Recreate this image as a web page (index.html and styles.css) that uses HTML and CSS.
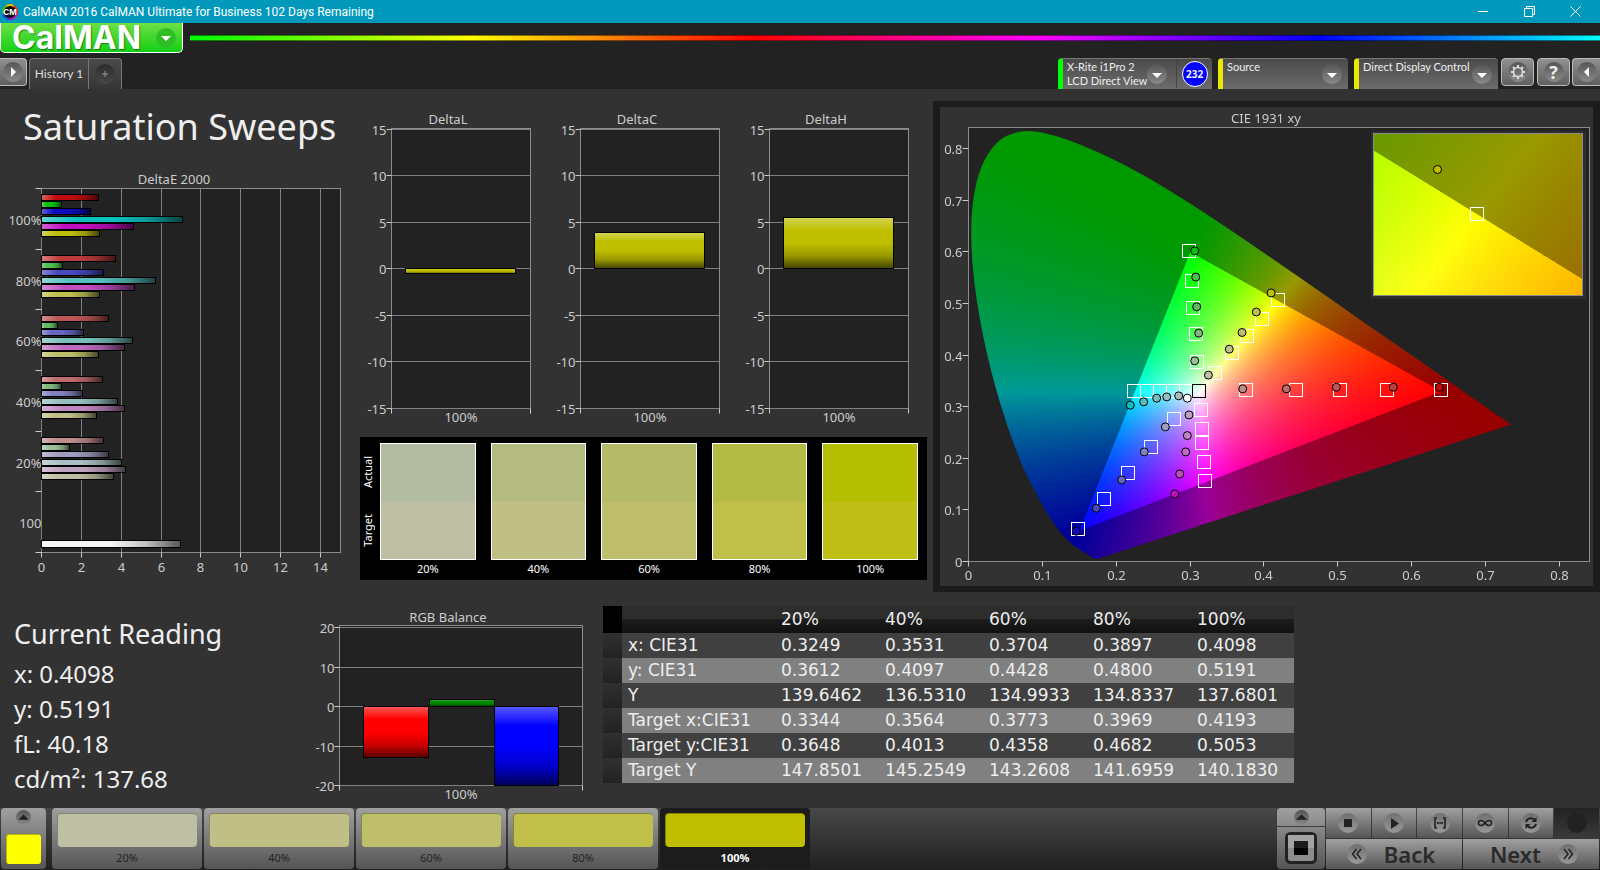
FILE: index.html
```html
<!DOCTYPE html>
<html lang="en">
<head>
<meta charset="UTF-8">
<meta name="viewport" content="width=device-width, initial-scale=1.0">
<title>CalMAN 2016 CalMAN Ultimate for Business</title>
<link rel="stylesheet" href="styles.css">
</head>
<body>

<div class="titlebar">
  <svg class="app-icon" viewBox="0 0 16 16">
    <circle cx="8" cy="8" r="8" fill="#e02a1a"/>
    <path d="M8 8L0 10A8 8 0 0 1 4 1z" fill="#35c020"/>
    <path d="M8 8L4 1A8 8 0 0 1 12 1z" fill="#d8c400"/>
    <path d="M8 8L12 15A8 8 0 0 1 0 10z" fill="#1c4be0"/>
    <path d="M8 8L16 9A8 8 0 0 1 8 16z" fill="#b01ac0"/>
    <circle cx="8" cy="8" r="6" fill="#080808"/>
    <text x="8" y="11" text-anchor="middle" class="app-icon-text">CM</text>
  </svg>
  <span class="titlebar-text">CalMAN 2016 CalMAN Ultimate for Business 102 Days Remaining</span>
  <div class="window-buttons">
    <button type="button" aria-label="Minimize"><svg width="11" height="11" viewBox="0 0 11 11"><path d="M0 5.5h10"/></svg></button>
    <button type="button" aria-label="Restore"><svg width="11" height="11" viewBox="0 0 11 11"><path d="M.5 2.5h8v8h-8zM2.5 2.5v-2h8v8h-2"/></svg></button>
    <button type="button" aria-label="Close"><svg width="11" height="11" viewBox="0 0 11 11"><path d="M.5.5l10 10M10.5.5l-10 10"/></svg></button>
  </div>
</div>

<div class="brand-row">
  <button type="button" class="brand">
    <span class="brand-text">CalMAN</span>
    <svg class="brand-arrow" viewBox="0 0 20 20"><circle cx="10" cy="10" r="10" fill="#2fbf25"/><path d="M5 8h10l-5 5z" fill="#fff"/></svg>
  </button>
  <div class="spectrum"></div>
</div>

<div class="tab-row">
  <button type="button" class="square-btn first" aria-label="Expand"><span class="dimple"><svg viewBox="0 0 20 20"><path d="M8 5l5 5-5 5z" fill="#fff"/></svg></span></button>
  <div class="tabs">
    <button type="button" class="tab">History 1</button>
    <button type="button" class="tab tab-add" aria-label="Add tab"><span class="dimple"><svg viewBox="0 0 20 20"><path d="M10 7v6M7 10h6" stroke="#999"/></svg></span></button>
  </div>
  <div class="devices">
    <button type="button" class="device meter green">
      <span class="device-name">X-Rite i1Pro 2<br>LCD Direct View</span>
      <span class="dimple"><svg viewBox="0 0 20 20"><path d="M5 9h10l-5 5z" fill="#fff"/></svg></span>
      <span class="meter-count"><b>232</b></span>
    </button>
    <button type="button" class="device source yellow">
      <span class="device-name">Source</span>
      <span class="dimple"><svg viewBox="0 0 20 20"><path d="M5 9h10l-5 5z" fill="#fff"/></svg></span>
    </button>
    <button type="button" class="device display yellow">
      <span class="device-name">Direct Display Control</span>
      <span class="dimple"><svg viewBox="0 0 20 20"><path d="M5 9h10l-5 5z" fill="#fff"/></svg></span>
    </button>
    <button type="button" class="square-btn" aria-label="Settings"><span class="dimple"><svg viewBox="0 0 20 20"><circle cx="10" cy="10" r="4.5" fill="none" stroke="#ddd" stroke-width="1.6"/><path d="M10 3v2M10 15v2M3 10h2M15 10h2M5 5l1.500 1.500M13.500 13.500L15 15M15 5l-1.500 1.500M6.500 13.500L5 15" stroke="#ddd" stroke-width="2"/></svg></span></button>
    <button type="button" class="square-btn help" aria-label="Help"><span class="dimple">?</span></button>
    <button type="button" class="square-btn last" aria-label="Collapse"><span class="dimple"><svg viewBox="0 0 20 20"><path d="M12 5l-5 5 5 5z" fill="#fff"/></svg></span></button>
  </div>
</div>

<main>
  <section class="upper">
    <div class="sweeps">
      <h1>Saturation Sweeps</h1>
      <svg id="deltaE" class="chart" viewBox="0 0 352 410"></svg>
    </div>

    <div class="deltas">
      <div class="delta-charts">
        <svg id="deltaL" class="chart" viewBox="0 0 189 320"></svg>
        <svg id="deltaC" class="chart" viewBox="0 0 189 320"></svg>
        <svg id="deltaH" class="chart" viewBox="0 0 189 320"></svg>
      </div>
      <div class="swatches">
        <div class="swatch-side"><span>Actual</span><span>Target</span></div>
        <div class="swatch-list">
          <div class="s20"><div class="pair"><i></i><i></i></div>20%</div>
          <div class="s40"><div class="pair"><i></i><i></i></div>40%</div>
          <div class="s60"><div class="pair"><i></i><i></i></div>60%</div>
          <div class="s80"><div class="pair"><i></i><i></i></div>80%</div>
          <div class="s100"><div class="pair"><i></i><i></i></div>100%</div>
        </div>
      </div>
    </div>

    <div class="cie">
      <canvas id="gamut" width="653" height="479"></canvas>
      <svg id="ciePlot" class="chart cie-overlay" viewBox="0 0 653 479"></svg>
    </div>
  </section>

  <section class="lower">
    <div class="reading">
      <h2>Current Reading</h2>
      <p>x: 0.4098</p>
      <p>y: 0.5191</p>
      <p>fL: 40.18</p>
      <p>cd/m²: 137.68</p>
    </div>
    <svg id="rgb" class="chart rgb-chart" viewBox="0 0 280 200"></svg>
    <table class="data">
      <thead>
        <tr><th class="row-head"></th><th class="name"></th><th>20%</th><th>40%</th><th>60%</th><th>80%</th><th>100%</th></tr>
      </thead>
      <tbody>
        <tr><td class="row-head"></td><td class="name">x: CIE31</td><td>0.3249</td><td>0.3531</td><td>0.3704</td><td>0.3897</td><td>0.4098</td></tr>
        <tr><td class="row-head"></td><td class="name">y: CIE31</td><td>0.3612</td><td>0.4097</td><td>0.4428</td><td>0.4800</td><td>0.5191</td></tr>
        <tr><td class="row-head"></td><td class="name">Y</td><td>139.6462</td><td>136.5310</td><td>134.9933</td><td>134.8337</td><td>137.6801</td></tr>
        <tr><td class="row-head"></td><td class="name">Target x:CIE31</td><td>0.3344</td><td>0.3564</td><td>0.3773</td><td>0.3969</td><td>0.4193</td></tr>
        <tr><td class="row-head"></td><td class="name">Target y:CIE31</td><td>0.3648</td><td>0.4013</td><td>0.4358</td><td>0.4682</td><td>0.5053</td></tr>
        <tr><td class="row-head"></td><td class="name">Target Y</td><td>147.8501</td><td>145.2549</td><td>143.2608</td><td>141.6959</td><td>140.1830</td></tr>
      </tbody>
    </table>
  </section>
</main>

<footer>
  <button type="button" class="current-color" aria-label="Current color">
    <span class="dimple small"><svg viewBox="0 0 20 20"><path d="M3 13h14l-7-7z" fill="#222"/></svg></span>
    <i></i>
  </button>
  <div class="levels">
    <button type="button" class="level s20"><i></i>20%</button>
    <button type="button" class="level s40"><i></i>40%</button>
    <button type="button" class="level s60"><i></i>60%</button>
    <button type="button" class="level s80"><i></i>80%</button>
    <button type="button" class="level s100 selected"><i></i>100%</button>
  </div>
  <div class="mode">
    <button type="button" class="mode-up" aria-label="Show more"><span class="dimple small"><svg viewBox="0 0 20 20"><path d="M2 13h16l-8-7z" fill="#222"/></svg></span></button>
    <button type="button" class="mode-stop" aria-label="Pattern window"><svg width="32" height="32" viewBox="0 0 32 32"><rect x="1.500" y="1.500" width="29" height="29" rx="4" fill="#8c8c8c" stroke="#222" stroke-width="3"/><path d="M3 3h26v13H3z" fill="#a4a4a4"/><path d="M9 9h14v14H9z" fill="#000"/><path d="M9 9h14v7H9z" fill="#1c1c1c"/></svg></button>
  </div>
  <div class="controls">
    <button type="button" aria-label="Stop"><span class="dimple"><svg viewBox="0 0 20 20"><path d="M6 6h8v8H6z" fill="#222"/></svg></span></button>
    <button type="button" aria-label="Play"><span class="dimple"><svg viewBox="0 0 20 20"><path d="M7 5l8 5.500L7 16z" fill="#222"/></svg></span></button>
    <button type="button" aria-label="Read series"><span class="dimple"><svg viewBox="0 0 20 20"><path d="M7 5H5v10h2M13 5h2v10h-2" fill="none" stroke="#222" stroke-width="1.600"/><path d="M7 9h1.500v2H7zM9.300 9h1.500v2H9.300zM11.500 9H13v2h-1.500z" fill="#222"/></svg></span></button>
    <button type="button" aria-label="Continuous"><span class="dimple"><svg viewBox="0 0 20 20"><path d="M10 10C8 7 3.500 6.500 3.500 10S8 13 10 10s6.500-3.500 6.500 0S12 13 10 10z" fill="none" stroke="#222" stroke-width="1.600"/></svg></span></button>
    <button type="button" aria-label="Refresh"><span class="dimple"><svg viewBox="0 0 20 20"><path d="M5 9c1-4 6-5 8.500-2M15 11c-1 4-6 5-8.500 2" fill="none" stroke="#222" stroke-width="2"/><path d="M15.500 4v5h-5zM4.500 16v-5h5z" fill="#222"/></svg></span></button>
    <button type="button" class="off" aria-label="Record" disabled><span class="dimple"></span></button>
    <button type="button" class="nav"><span class="dimple"><svg viewBox="0 0 20 20"><path d="M9.500 5l-4 5 4 5M14 5l-4 5 4 5" fill="none" stroke="#222" stroke-width="1.500"/></svg></span><span>Back</span></button>
    <button type="button" class="nav"><span>Next</span><span class="dimple"><svg viewBox="0 0 20 20"><path d="M6 5l4 5-4 5M10.500 5l4 5-4 5" fill="none" stroke="#222" stroke-width="1.500"/></svg></span></button>
  </div>
</footer>

<script src="charts.js"></script>
</body>
</html>
```
FILE: styles.css
```css
* {
  box-sizing: border-box;
}

body {
  margin: 0;
  min-height: 100vh;
  display: flex;
  flex-direction: column;
  background: #222;
  color: #eee;
  font-family: "Noto Sans", "Open Sans", sans-serif;
}

button {
  border: 0;
  padding: 0;
  margin: 0;
  background: none;
  color: inherit;
  font-family: inherit;
  cursor: pointer;
}

svg {
  display: block;
}

/* title bar */
.titlebar {
  display: flex;
  align-items: center;
  height: 23px;
  padding-left: 2px;
  background: #0099bc;
}

.app-icon {
  width: 16px;
  height: 16px;
}

.app-icon-text {
  font: bold 8px Inter, sans-serif;
  fill: #fff;
}

.titlebar-text {
  margin-left: 5px;
  font-size: 12px;
  line-height: 16px;
  font-family: Roboto, sans-serif;
  color: #fff;
}

.window-buttons {
  display: flex;
  margin-left: auto;
}

.window-buttons button {
  width: 46px;
  height: 20px;
  display: flex;
  align-items: center;
  justify-content: center;
}

.window-buttons button:last-child {
  margin-right: 2px;
}

.window-buttons path {
  fill: none;
  stroke: #fff;
}

/* logo and rainbow line */
.brand-row {
  display: flex;
  height: 35px;
}

.brand {
  display: flex;
  align-items: center;
  justify-content: space-between;
  width: 183px;
  height: 30px;
  padding: 0 6px 0 11px;
  border: 1px solid #fff;
  border-top: 0;
  border-radius: 0 0 5px 5px;
  background: linear-gradient(#6de045, #15cf15);
}

.brand-text {
  font: bold 32px/28px Inter, sans-serif;
  color: #fff;
  text-shadow: 1px 1px 1px rgba(0, 0, 0, 0.4);
}

.brand-arrow {
  width: 20px;
  height: 20px;
}

.spectrum {
  flex: 1;
  height: 6px;
  margin: 12px 0 0 7px;
  border: solid rgba(0, 0, 0, 0.5);
  border-width: 1px 0;
  background: linear-gradient(to right, #0f0, #ff0, #f00, #f0f, #00f, #0ff) border-box;
}

/* tabs and devices */
.tab-row {
  display: flex;
  height: 31px;
}

.dimple {
  display: flex;
  align-items: center;
  justify-content: center;
  width: 20px;
  height: 20px;
  border-radius: 50%;
  background: linear-gradient(#555, #8a8a8a);
}

.dimple svg {
  width: 100%;
  height: 100%;
}

.dimple.small {
  width: 15px;
  height: 15px;
}

.square-btn {
  display: flex;
  align-items: center;
  justify-content: center;
  width: 33px;
  height: 28px;
  margin-left: 3px;
  border: 1px solid #bbb;
  border-radius: 4px;
  background: linear-gradient(#909090, #606060);
}

.square-btn.first {
  width: 27px;
  margin-left: 0;
  border-left: 0;
  border-radius: 0 4px 4px 0;
}

.square-btn.last {
  width: 28px;
  margin-left: 2px;
  border-right: 0;
  border-radius: 4px 0 0 4px;
}

.square-btn.help {
  font: bold 18px/20px "Open Sans", sans-serif;
}

.tabs {
  display: flex;
  margin-left: 2px;
  border: 1px solid #777;
  border-bottom: 0;
  border-radius: 4px 4px 0 0;
  background: linear-gradient(#4a4a4a, #363636);
}

.tab {
  width: 58px;
  font: 12px/16px Lato, sans-serif;
  white-space: nowrap;
  color: #ddd;
}

.tab-add {
  display: flex;
  align-items: center;
  justify-content: center;
  width: 33px;
  border-left: 1px solid #777;
}

.tab-add .dimple {
  background: linear-gradient(#2c2c2c, #484848);
}

.devices {
  display: flex;
  margin-left: auto;
}

.device {
  display: flex;
  align-items: flex-start;
  justify-content: space-between;
  margin-right: 6px;
  padding: 1px 6px 0 4px;
  border-left: 5px solid #ff0;
  border-top: 1px solid #777;
  border-radius: 4px 4px 0 0;
  background: linear-gradient(#4a4a4a, #6c6c6c);
}

.device.green {
  border-left-color: #0f0;
}

.device.yellow {
  border-left-color: #e8e800;
}

.device.meter {
  width: 154px;
  padding-right: 0;
}

.device.source {
  width: 130px;
}

.device.display {
  width: 144px;
  margin-right: 0;
}

.device-name {
  font: 11px/14px Lato, sans-serif;
  white-space: nowrap;
  text-align: left;
}

.device .dimple {
  flex: none;
  margin-top: 4px;
}

.meter .dimple {
  margin-left: auto;
  margin-right: 9px;
}

.meter-count {
  display: flex;
  align-items: center;
  justify-content: center;
  width: 36px;
  height: 28px;
  border-left: 1px solid #444;
}

.meter-count b {
  width: 26px;
  height: 26px;
  border: 1px solid #fff;
  border-radius: 50%;
  background: #00f;
  font-size: 10px;
  line-height: 24px;
  text-align: center;
}

/* main panel */
main {
  flex: 1;
  padding-left: 1px;
  background: #323232;
}

.upper {
  display: grid;
  grid-template-columns: 352fr 580fr 667fr;
  align-items: start;
}

.chart {
  width: 100%;
  height: auto;
}

.chart text {
  font-size: 13px;
  fill: #ccc;
  dominant-baseline: central;
}

.plot-area {
  fill: #222;
  stroke: #8c8c8c;
}

.grid-line {
  stroke: #808080;
}

.tick {
  stroke: #ccc;
}

.bar-edge {
  fill: none;
  stroke: #000;
}

h1 {
  margin: 14px 0 19px 22px;
  font-weight: normal;
  font-size: 36px;
  line-height: 48px;
  white-space: nowrap;
}

.delta-charts {
  display: grid;
  grid-template-columns: 1fr 1fr 1fr;
  padding: 16px 13px 0 0;
}

.swatches {
  display: flex;
  margin: 12px 6px 0 7px;
  padding: 6px 9px 2px 0;
  background: #000;
  color: #fff;
  font-size: 11px;
  line-height: 18px;
  text-align: center;
}

.swatch-side {
  display: flex;
  flex-direction: column;
  justify-content: space-around;
  align-items: center;
  width: 20px;
  height: 117px;
  padding-right: 4px;
}

.swatch-side span {
  writing-mode: vertical-rl;
  transform: rotate(180deg);
  line-height: 16px;
}

.swatch-list {
  flex: 1;
  display: grid;
  grid-template-columns: repeat(5, 1fr);
  gap: 15px;
}

.pair {
  display: flex;
  flex-direction: column;
  height: 117px;
  border: 1px solid #fff;
}

.pair i {
  flex: 1;
}

.s20 .pair { background: #b3bba2; }
.s20 .pair i + i, .s20 > i { background: #bfbfa4; }
.s40 .pair { background: #b3bb80; }
.s40 .pair i + i, .s40 > i { background: #bfbf86; }
.s60 .pair { background: #b3bb68; }
.s60 .pair i + i, .s60 > i { background: #bfbf6b; }
.s80 .pair { background: #b3bb45; }
.s80 .pair i + i, .s80 > i { background: #bfbf4a; }
.s100 .pair { background: #b3bf00; }
.s100 .pair i + i { background: #bfbf17; }
.s100 > i { background: #bfbf00; }

.cie {
  position: relative;
  margin-top: 12px;
  border: solid #1b1b1b;
  border-width: 6px 7px;
}

.cie canvas {
  display: block;
  width: 100%;
}

/* axes and markers lie over the painted gamut */
.cie-overlay {
  position: absolute;
  top: 0;
  left: 0;
}

.cie-overlay .plot-area {
  fill: none;
}

.target {
  fill: none;
  stroke: #fff;
}

.target.white {
  stroke: #000;
}

.actual {
  stroke: #000;
}

.lower {
  display: grid;
  grid-template-columns: 312fr 280fr 1007fr;
  align-items: start;
}

.reading {
  padding: 24px 0 0 13px;
}

.reading h2 {
  margin: 0 0 4px;
  font-weight: normal;
  font-size: 27px;
  line-height: 36px;
}

.reading p {
  margin: 0;
  font-size: 24px;
  line-height: 35px;
}

.rgb-chart {
  margin-top: 13px;
}

.data {
  width: 691px;
  margin: 14px 0 0 10px;
  border-collapse: collapse;
  table-layout: fixed;
  font-family: "DejaVu Sans", sans-serif;
  font-size: 17px;
  line-height: 25px;
}

.data th,
.data td {
  height: 25px;
  padding: 0;
  font-weight: normal;
  text-align: left;
}

.data th {
  width: 104px;
  height: 27px;
}

.data th:last-child {
  width: auto;
}

.data thead tr {
  background: linear-gradient(#2d2d2d 48%, #1c1c1c 50%, #111);
}

.data tbody tr {
  background: #404040;
}

.data tbody tr:nth-child(even) {
  background: #808080;
}

.data .row-head {
  width: 19px;
  background: linear-gradient(#303030, #222);
}

.data th.row-head {
  background: #000;
}

.data .name {
  width: 159px;
  padding-left: 6px;
}

/* bottom bar */
footer {
  display: flex;
  height: 62px;
  padding: 0 1px 1px;
  background: linear-gradient(#484848, #202020);
}

.current-color,
.level {
  display: flex;
  flex-direction: column;
  align-items: center;
  border-radius: 4px;
  background: linear-gradient(#a0a0a0, #555);
}

.current-color {
  justify-content: space-between;
  width: 45px;
  padding: 2px 5px 5px;
}

.current-color i {
  width: 35px;
  height: 30px;
  border-radius: 3px;
  border: solid #b8b800;
  border-width: 1px 0 0 1px;
  background: #ff0;
}

.levels {
  display: flex;
  gap: 2px;
  margin-left: 6px;
}

.level {
  width: 150px;
  padding: 5px 5px 0;
  color: #222;
  font-size: 11px;
  line-height: 22px;
}

.level i {
  width: 100%;
  height: 36px;
  border-radius: 4px;
  border: solid rgba(0, 0, 0, 0.3);
  border-width: 1px 0 0 1px;
}

.level.selected {
  background: #1c1c1c;
  color: #fff;
  font-weight: bold;
}

.mode {
  display: flex;
  flex-direction: column;
  width: 48px;
  margin-left: auto;
}

.mode button {
  display: flex;
  align-items: center;
  justify-content: center;
}

.mode-up {
  height: 18px;
  border-radius: 4px 4px 0 0;
  background: linear-gradient(#a0a0a0, #8a8a8a);
}

.mode-stop {
  flex: 1;
  margin-top: 1px;
  border-radius: 0 0 4px 4px;
  background: linear-gradient(#888, #555);
}

.controls {
  display: grid;
  grid-template-columns: repeat(6, 1fr);
  grid-template-rows: 30px 30px;
  gap: 1px;
  width: 273px;
  margin-left: 1px;
}

.controls button {
  display: flex;
  align-items: center;
  justify-content: center;
  background: linear-gradient(#a0a0a0, #555);
}

.controls .off {
  background: linear-gradient(#222, #3a3a3a);
}

.controls .off .dimple {
  background: #222;
}

.controls .dimple {
  background: linear-gradient(#707070, #989898);
}

.controls .nav {
  grid-column: span 3;
  gap: 17px;
  padding-right: 6px;
  color: #2a2a2a;
  font-size: 22px;
  font-weight: 600;
  line-height: 28px;
}

.controls .nav:last-child {
  padding: 0 0 0 6px;
}
```
FILE: charts.js
```
const SVG = 'http://www.w3.org/2000/svg';

function add(parent, tag, attrs, text) {
  const el = document.createElementNS(SVG, tag);
  for (const key in attrs) el.setAttribute(key, attrs[key]);
  if (text !== undefined) el.textContent = text;
  parent.appendChild(el);
  return el;
}

function line(svg, cls, x1, y1, x2, y2) {
  add(svg, 'line', { class: cls, x1, y1, x2, y2 });
}

function label(svg, x, y, text, anchor) {
  add(svg, 'text', { x, y, 'text-anchor': anchor || 'middle' }, text);
}

// light at one end and dark at the other, laid over the flat bar colour
function addShade(svg, horizontal) {
  const defs = add(svg, 'defs', {});
  const g = add(defs, 'linearGradient', { id: svg.id + 'Shade', x1: 0, y1: 0, x2: horizontal ? 1 : 0, y2: horizontal ? 0 : 1 });
  [[0, '#fff', 0.35], [0.25, '#fff', 0], [0.5, '#000', 0], [0.75, '#000', 0.2], [1, '#000', 0.65]].forEach(([offset, c, o]) => {
    add(g, 'stop', { offset, 'stop-color': c, 'stop-opacity': o });
  });
}

function bar(svg, x, y, width, height, fill) {
  add(svg, 'rect', { x, y, width, height, fill });
  add(svg, 'rect', { x, y, width, height, fill: `url(#${svg.id}Shade)` });
  add(svg, 'rect', { class: 'bar-edge', x, y, width, height });
}

// DeltaE 2000, one group of bars for each saturation level
const groups = [
  { name: '100%', values: [2.87, 1.0, 2.46, 7.05, 4.63, 2.92], colors: ['#bf0d0d', '#0dbf0d', '#0d0dbf', '#0dbfbf', '#bf0dbf', '#bfbf0d'] },
  { name: '80%', values: [3.73, 1.06, 3.12, 5.74, 4.68, 2.92], colors: ['#bf3c3c', '#4dbf4d', '#4848bf', '#55bfbf', '#bf4fbf', '#bfbf4d'] },
  { name: '60%', values: [3.37, 0.8, 2.11, 4.58, 4.18, 2.87], colors: ['#bf5555', '#62b862', '#6666bf', '#76bfbb', '#bf6bbf', '#bfbf6b'] },
  { name: '40%', values: [3.07, 1.0, 2.06, 3.83, 4.18, 2.77], colors: ['#bf6c6c', '#7fb87f', '#8080bf', '#93bfbf', '#bf87bf', '#bfbf87'] },
  { name: '20%', values: [3.12, 1.4, 3.37, 4.03, 4.23, 3.63], colors: ['#bf8c8c', '#9abf9a', '#9e9ebf', '#aabfc3', '#bfa0bf', '#bfbfa4'] },
  { name: '100', values: [], colors: [] }
];

function drawDeltaE() {
  const svg = document.getElementById('deltaE');
  const left = 40.5, top = 18.5, right = 339.5, bottom = 382.5;
  const unit = (right - left) / 15;
  const step = (bottom - top) / groups.length;
  addShade(svg, true);
  label(svg, 173, 9, 'DeltaE 2000');
  add(svg, 'rect', { class: 'plot-area', x: left, y: top, width: right - left, height: bottom - top });
  for (let v = 0; v < 15; v += 2) {
    const x = Math.floor(left + v * unit) + 0.5;
    line(svg, 'grid-line', x, top, x, bottom);
    line(svg, 'tick', x, bottom, x, bottom + 5);
    label(svg, x, 397, v);
  }
  for (let i = 0; i <= groups.length; i++) {
    const y = Math.floor(top + i * step) + 0.5;
    line(svg, 'tick', left - 6, y, left, y);
  }
  groups.forEach((group, i) => {
    label(svg, left, top + (i + 0.5) * step + 1, group.name, 'end');
    group.values.forEach((v, k) => {
      const y = Math.floor(top + i * step) + 6.5 + Math.round(k * 7.2);
      bar(svg, left, y, Math.round(v * unit), 6, group.colors[k]);
    });
  });
  bar(svg, left, 370.5, 139, 7, '#f4f4f4');
}

// vertical bars round a zero line
function drawBars(id, o) {
  const svg = document.getElementById(id);
  const y = v => Math.round(o.zero - v * o.unit) + 0.5;
  addShade(svg, false);
  label(svg, o.titleX, o.titleY, o.title);
  add(svg, 'rect', { class: 'plot-area', x: o.left, y: o.top, width: o.right - o.left, height: y(-o.max) - o.top });
  for (let v = -o.max; v <= o.max; v += o.step) {
    line(svg, 'grid-line', o.left, y(v), o.right, y(v));
    line(svg, 'tick', o.left - 5, y(v), o.left, y(v));
    label(svg, o.left - 5, y(v), v, 'end');
  }
  line(svg, 'tick', o.left, y(-o.max), o.left, y(-o.max) + 5);
  line(svg, 'tick', o.right, y(-o.max), o.right, y(-o.max) + 5);
  label(svg, (o.left + o.right) / 2, y(-o.max) + 8, '100%');
  o.bars.forEach(b => {
    const y1 = y(Math.max(b.value, 0));
    const y2 = y(Math.min(b.value, 0));
    bar(svg, b.x, y1, b.width, y2 - y1, b.color);
  });
}

function drawDelta(id, title, value) {
  drawBars(id, {
    title, titleX: 95, titleY: 14, left: 38.5, right: 177.5, top: 23.5, zero: 163, unit: 9.3, max: 15, step: 5,
    bars: [{ x: 52.5, width: 110, value, color: '#bfbf00' }]
  });
}

// CIE 1931 chart
const locus = [
  [.1741, .0050], [.1714, .0051], [.1689, .0069], [.1644, .0109], [.1566, .0177], [.1440, .0297], [.1355, .0399],
  [.1241, .0578], [.1096, .0868], [.0913, .1327], [.0687, .2007], [.0454, .2950], [.0235, .4127], [.0082, .5384],
  [.0039, .6548], [.0139, .7502], [.0389, .8120], [.0743, .8338], [.1142, .8262], [.1547, .8059], [.1929, .7816],
  [.2296, .7543], [.2658, .7243], [.3016, .6923], [.3373, .6589], [.3731, .6245], [.4441, .5547], [.5125, .4866],
  [.5752, .4242], [.6270, .3725], [.6658, .3340], [.6915, .3083], [.7190, .2809], [.7347, .2653]
];

const cie = { left: 28.5, top: 20.5, right: 649.5, bottom: 454.5, ux: 738.5, uy: 516 };
const inset = { left: 433.5, top: 26.5, right: 642.5, bottom: 188.5, cx: 537, cy: 107, x: .4193, y: .5053, ux: 4158, uy: 3225 };

const px = x => cie.left + x * cie.ux;
const py = y => cie.bottom - y * cie.uy;

const targets = [
  [.2986, .602], [.3022, .544], [.304, .491], [.3077, .44], [.3094, .386],
  [.3344, .3660], [.3564, .4040], [.3773, .4370], [.3969, .4690], [.4193, .5065],
  [.3762, .3326], [.4435, .3326], [.503, .3326], [.5667, .3326], [.6398, .3326],
  [.2241, .33], [.2417, .33], [.2593, .33], [.2765, .33], [.2945, .33],
  [.3148, .2945], [.3162, .2576], [.3162, .2292], [.3185, .1935], [.3198, .156],
  [.2787, .277], [.2471, .2227], [.216, .1722], [.1835, .1212], [.1483, .063]
];

// measured points from 20% to 100%, coloured as their bars
const actuals = [
  [[.3713, .3346], [.4304, .3346], [.4981, .3378], [.5752, .3378], [.6375, .3375]],
  [[.3063, .3889], [.3117, .4426], [.309, .4936], [.3077, .5512], [.3063, .602]],
  [[.2665, .2609], [.238, .2124], [.2074, .1581], [.1731, .1032], [.146, .0586]],
  [[.2846, .321], [.2684, .319], [.2548, .3165], [.2372, .3094], [.2191, .303]],
  [[.2986, .2841], [.2963, .244], [.2941, .2124], [.286, .1697], [.2792, .1309]],
  [[.3249, .3612], [.3531, .4115], [.3704, .4438], [.3897, .4835], [.4098, .5205]]
];

function gamutColor(x, y) {
  const z = 1 - x - y;
  const r = 3.2406 * x - 1.5372 * y - 0.4986 * z;
  const g = -0.9689 * x + 1.8758 * y + 0.0415 * z;
  const b = 0.0557 * x - 0.2040 * y + 1.0570 * z;
  const inside = r >= 0 && g >= 0 && b >= 0;
  const scale = (inside ? 255 : 153) / Math.max(r, g, b);
  return [Math.max(r, 0) * scale, Math.max(g, 0) * scale, Math.max(b, 0) * scale];
}

// painted at double size, then scaled down for smooth edges
function paintField(width, height, toXY) {
  const field = document.createElement('canvas');
  field.width = width * 2;
  field.height = height * 2;
  const ctx = field.getContext('2d');
  const img = ctx.createImageData(field.width, field.height);
  let n = 0;
  for (let j = 0; j < field.height; j++) {
    for (let i = 0; i < field.width; i++) {
      const [x, y] = toXY(i / 2, j / 2);
      const c = gamutColor(x, y);
      img.data[n++] = c[0];
      img.data[n++] = c[1];
      img.data[n++] = c[2];
      img.data[n++] = 255;
    }
  }
  ctx.putImageData(img, 0, 0);
  return field;
}

function paintGamut() {
  const canvas = document.getElementById('gamut');
  const ctx = canvas.getContext('2d');
  ctx.fillStyle = '#222';
  ctx.fillRect(cie.left, cie.top, cie.right - cie.left, cie.bottom - cie.top);

  const field = paintField(canvas.width, canvas.height, (i, j) => [(i - cie.left) / cie.ux, (cie.bottom - j) / cie.uy]);
  ctx.save();
  ctx.beginPath();
  ctx.moveTo(px(locus[0][0]), py(locus[0][1]));
  for (let i = 0; i < locus.length - 1; i++) {
    const p0 = locus[Math.max(i - 1, 0)], p1 = locus[i], p2 = locus[i + 1], p3 = locus[Math.min(i + 2, locus.length - 1)];
    ctx.bezierCurveTo(
      px(p1[0] + (p2[0] - p0[0]) / 6), py(p1[1] + (p2[1] - p0[1]) / 6),
      px(p2[0] - (p3[0] - p1[0]) / 6), py(p2[1] - (p3[1] - p1[1]) / 6),
      px(p2[0]), py(p2[1]));
  }
  ctx.closePath();
  ctx.clip();
  ctx.drawImage(field, 0, 0, canvas.width, canvas.height);
  ctx.restore();

  const w = inset.right - inset.left, h = inset.bottom - inset.top;
  ctx.fillStyle = '#2d2d2d';
  ctx.fillRect(inset.left - 2.5, inset.top - 2.5, w + 6, h + 6);
  const zoomed = paintField(w, h, (i, j) => [
    inset.x + (i + inset.left - inset.cx) / inset.ux,
    inset.y - (j + inset.top - inset.cy) / inset.uy
  ]);
  ctx.drawImage(zoomed, inset.left, inset.top, w, h);
}

function square(svg, x, y, cls) {
  add(svg, 'rect', { class: cls, x: Math.round(x) - 6.5, y: Math.round(y) - 6.5, width: 13, height: 13 });
}

function drawCie() {
  const svg = document.getElementById('ciePlot');
  label(svg, 326, 11, 'CIE 1931 xy');
  add(svg, 'rect', { class: 'plot-area', x: cie.left, y: cie.top, width: cie.right - cie.left, height: cie.bottom - cie.top });
  for (let i = 0; i <= 8; i++) {
    const x = Math.floor(px(i / 10)) + 0.5;
    const y = Math.floor(py(i / 10)) + 0.5;
    line(svg, 'tick', x, cie.bottom, x, cie.bottom + 5);
    line(svg, 'tick', cie.left - 6, y, cie.left, y);
    label(svg, x, 468, i / 10);
    label(svg, cie.left - 6, y, i / 10, 'end');
  }
  targets.forEach(([x, y]) => square(svg, px(x), py(y), 'target'));
  square(svg, px(.3126), py(.33), 'target white');
  actuals.forEach((points, hue) => {
    points.forEach(([x, y], i) => {
      add(svg, 'circle', { class: 'actual', cx: px(x), cy: py(y), r: 4, fill: groups[4 - i].colors[hue] });
    });
  });
  add(svg, 'circle', { class: 'actual', cx: px(.2963), cy: py(.3165), r: 4, fill: '#fff' });

  add(svg, 'rect', { class: 'plot-area', x: inset.left, y: inset.top, width: inset.right - inset.left, height: inset.bottom - inset.top });
  square(svg, inset.cx, inset.cy, 'target');
  add(svg, 'circle', { class: 'actual', cx: inset.cx + (.4098 - inset.x) * inset.ux, cy: inset.cy - (.5191 - inset.y) * inset.uy, r: 4, fill: '#bfbf00' });
}

drawDeltaE();
drawDelta('deltaL', 'DeltaL', -0.5);
drawDelta('deltaC', 'DeltaC', 3.9);
drawDelta('deltaH', 'DeltaH', 5.5);
drawBars('rgb', {
  title: 'RGB Balance', titleX: 135, titleY: 12, left: 26.5, right: 269.5, top: 20.5, zero: 101, unit: 3.95, max: 20, step: 10,
  bars: [
    { x: 50.5, width: 65, value: -13, color: '#f00' },
    { x: 116.5, width: 65, value: 1.8, color: '#008c00' },
    { x: 181.5, width: 64, value: -20, color: '#00f' }
  ]
});
paintGamut();
drawCie();
```
